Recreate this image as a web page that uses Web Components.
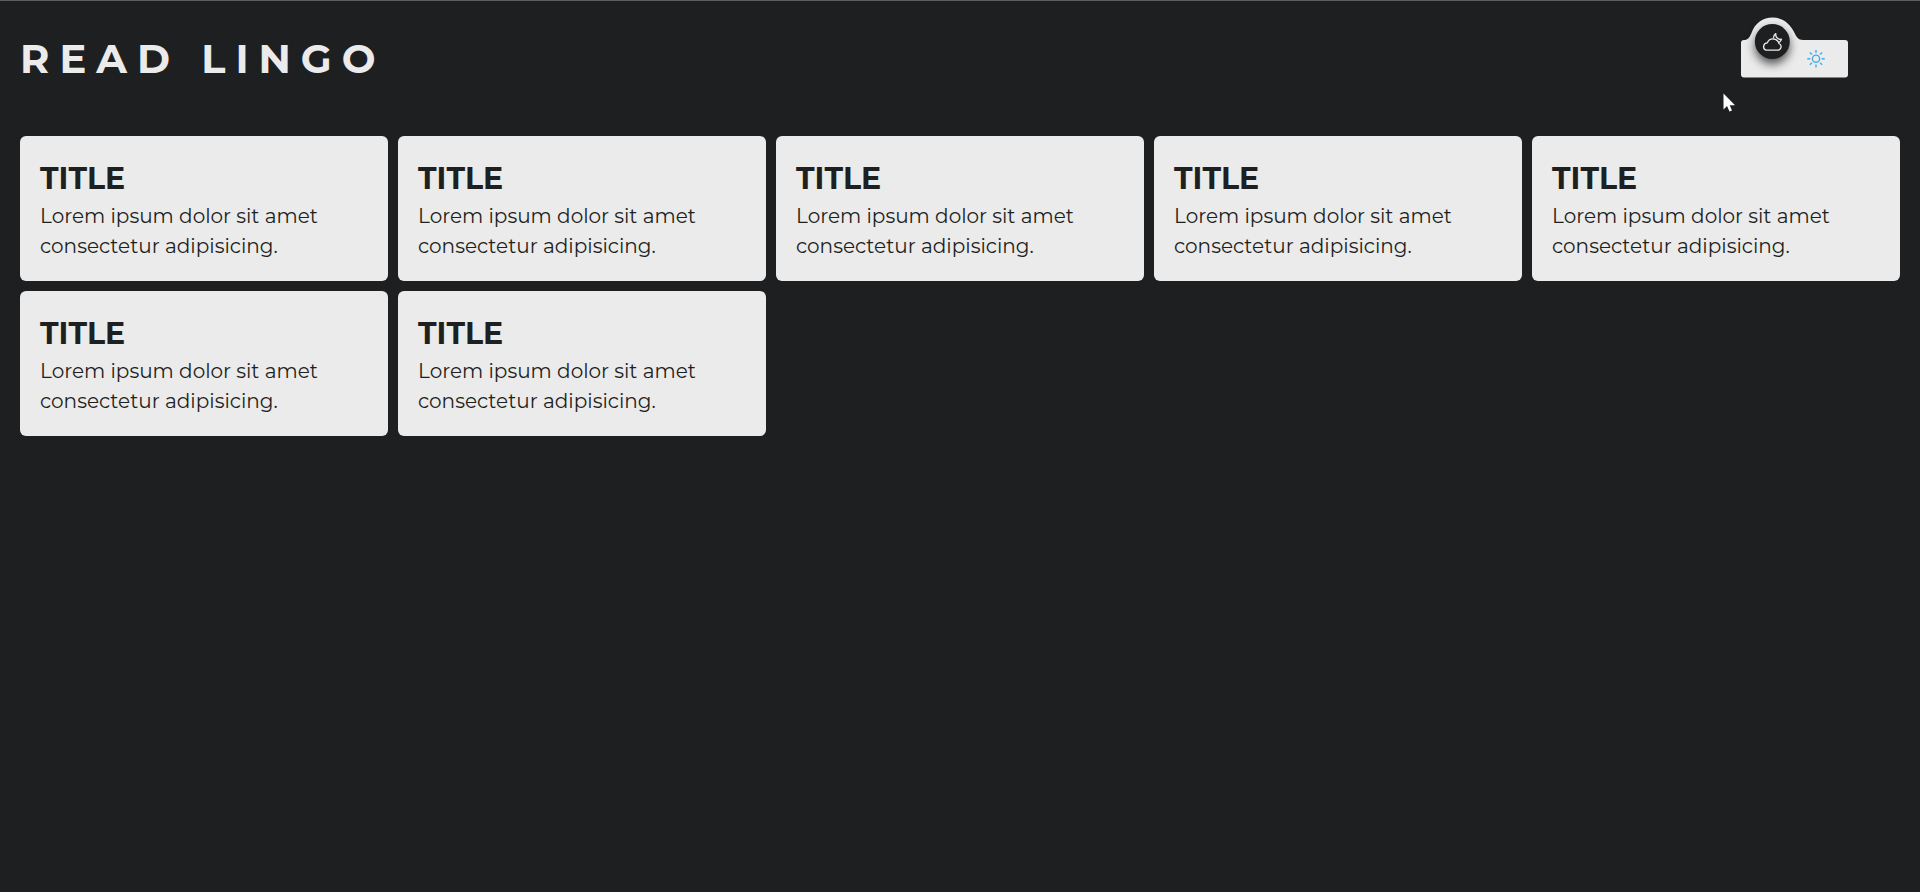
<!DOCTYPE html>
<html lang="en">
<head>
<meta charset="utf-8">
<title>Read Lingo</title>
<meta name="viewport" content="width=device-width, initial-scale=1">
<style>
  html { background: #1e1f21; }
  body { margin: 0; font-family: Montserrat, Inter, "Open Sans", sans-serif; color: #1e1f21; }
</style>
</head>
<body>
<lingo-app>
  <lingo-header slot="header">Read Lingo<theme-switch slot="action"></theme-switch></lingo-header>
  <lingo-card><span slot="title">Title</span>Lorem ipsum dolor sit amet consectetur adipisicing.</lingo-card>
  <lingo-card><span slot="title">Title</span>Lorem ipsum dolor sit amet consectetur adipisicing.</lingo-card>
  <lingo-card><span slot="title">Title</span>Lorem ipsum dolor sit amet consectetur adipisicing.</lingo-card>
  <lingo-card><span slot="title">Title</span>Lorem ipsum dolor sit amet consectetur adipisicing.</lingo-card>
  <lingo-card><span slot="title">Title</span>Lorem ipsum dolor sit amet consectetur adipisicing.</lingo-card>
  <lingo-card><span slot="title">Title</span>Lorem ipsum dolor sit amet consectetur adipisicing.</lingo-card>
  <lingo-card><span slot="title">Title</span>Lorem ipsum dolor sit amet consectetur adipisicing.</lingo-card>
</lingo-app>
<pointer-arrow></pointer-arrow>
<script>
class Base extends HTMLElement {
  constructor() {
    super();
    this.attachShadow({ mode: "open" }).innerHTML = this.constructor.markup;
  }
}

class LingoApp extends Base {
  static markup = `
    <style>
      :host { display: block; border-top: 1px solid #5c5e60; }
      main {
        display: grid;
        grid-template-columns: repeat(auto-fill, minmax(320px, 1fr));
        gap: 10px;
        padding: 20px;
      }
    </style>
    <slot name="header"></slot>
    <main><slot></slot></main>`;
}

class LingoHeader extends Base {
  static markup = `
    <style>
      :host { display: block; }
      header {
        display: flex;
        justify-content: space-between;
        align-items: flex-start;
        padding: 16px 72px 27px 20px;
      }
      h1 {
        margin: 12px 0 0;
        font-size: 40px;
        line-height: 60px;
        font-weight: 700;
        letter-spacing: 10px;
        text-transform: uppercase;
        color: #ebebeb;
      }
    </style>
    <header><h1><slot></slot></h1><slot name="action"></slot></header>`;
}

class LingoCard extends Base {
  static markup = `
    <style>
      :host { display: block; }
      article { padding: 20px; border-radius: 6px; background: #ebebeb; }
      h2 { margin: 0; font-size: 30px; line-height: 45px; font-weight: 700; text-transform: uppercase; }
      p { margin: 0; font-size: 20px; line-height: 30px; font-weight: 400; }
    </style>
    <article><h2><slot name="title"></slot></h2><p><slot></slot></p></article>`;
}

class ThemeSwitch extends Base {
  static markup = `
    <style>
      :host { display: block; }
      label { display: grid; cursor: pointer; }
      label > * { grid-area: 1 / 1; }
      input { margin: 0; opacity: 0; width: 100%; height: 100%; cursor: pointer; }
      svg { display: block; overflow: visible; }
      .knob { filter: drop-shadow(0 5px 5px rgb(0 0 0 / 65%)); }
    </style>
    <label>
      <input type="checkbox" role="switch" aria-label="Dark theme" checked>
      <svg width="107" height="61" viewBox="0 0 107 61" fill="none" aria-hidden="true">
        <path fill="#ebebeb" d="M3 23C7 23 8.500 20.500 10.500 16C14 6 22 .5 31.500 .5S48.500 6 52.500 14C55.500 20 57 23 62 23H104A3 3 0 0 1 107 26V57.500A3 3 0 0 1 104 60.500H3A3 3 0 0 1 0 57.500V26A3 3 0 0 1 3 23Z"/>
        <circle class="knob" cx="31.300" cy="24.500" r="17.500" fill="#1e1f21"/>
        <g stroke="#ebebeb" stroke-width="1.300" stroke-linejoin="round" stroke-linecap="round">
          <path d="M25.200 33.200H36.500A3.500 3.500 0 0 0 38 26.500A6.200 6.200 0 0 0 26.300 25.800A3.800 3.800 0 0 0 25.200 33.200Z"/>
          <path d="M32.500 20.300C32.800 18.600 33.600 17.400 34.800 16.600C34.400 20.500 37 22.800 40.500 22.200C40.200 23.300 39.500 24.300 38.600 25"/>
        </g>
        <g stroke="#3daee9" stroke-width="1.400">
          <circle cx="75" cy="41.700" r="3.600"/>
          <path d="M75 33V36M75 47.500V50.500M66.300 41.700H69.300M80.700 41.700H83.700M68.900 35.600L70.900 37.600M79.100 45.800L81.100 47.800M68.900 47.800L70.900 45.800M79.100 37.600L81.100 35.600"/>
        </g>
      </svg>
    </label>`;
}

class PointerArrow extends Base {
  static markup = `
    <style>
      :host { position: absolute; top: 93px; right: 184px; pointer-events: none; }
      svg { display: block; }
    </style>
    <svg width="13" height="19" viewBox="0 0 13 19" aria-hidden="true">
      <path d="M.5 .5V16.500L4 13L6.500 18.500L9 17.500L6.700 12.200H12Z" fill="#fff"/>
    </svg>`;
}

customElements.define("lingo-app", LingoApp);
customElements.define("lingo-header", LingoHeader);
customElements.define("lingo-card", LingoCard);
customElements.define("theme-switch", ThemeSwitch);
customElements.define("pointer-arrow", PointerArrow);
</script>
</body>
</html>
